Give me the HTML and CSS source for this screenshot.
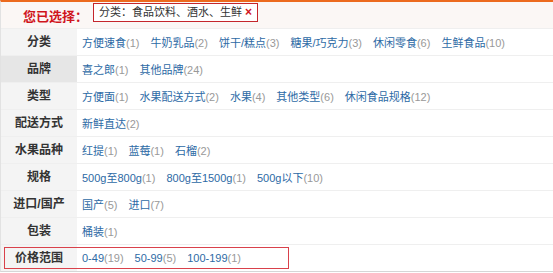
FILE: index.html
```html
<!DOCTYPE html>
<html lang="zh-CN">
  <head>
    <meta charset="UTF-8" />
    <meta name="viewport" content="width=device-width, initial-scale=1.0" />
    <title>筛选</title>
    <link rel="stylesheet" href="styles.css">
  </head>
  <body>
    <div class="filter">
      <div class="selected">
        <span class="selected-title">您已选择：</span>
        <span class="selected-tag">分类：食品饮料、酒水、生鲜 <b class="close">×</b></span>
      </div>

      <div class="row">
        <div class="label">分类</div>
        <div class="values">
          <a href="#">方便速食<i>(1)</i></a>
          <a href="#">牛奶乳品<i>(2)</i></a>
          <a href="#">饼干/糕点<i>(3)</i></a>
          <a href="#">糖果/巧克力<i>(3)</i></a>
          <a href="#">休闲零食<i>(6)</i></a>
          <a href="#">生鲜食品<i>(10)</i></a>
        </div>
      </div>
      <div class="row">
        <div class="label active">品牌</div>
        <div class="values">
          <a href="#">喜之郎<i>(1)</i></a>
          <a href="#">其他品牌<i>(24)</i></a>
        </div>
      </div>
      <div class="row">
        <div class="label">类型</div>
        <div class="values">
          <a href="#">方便面<i>(1)</i></a>
          <a href="#">水果配送方式<i>(2)</i></a>
          <a href="#">水果<i>(4)</i></a>
          <a href="#">其他类型<i>(6)</i></a>
          <a href="#">休闲食品规格<i>(12)</i></a>
        </div>
      </div>
      <div class="row">
        <div class="label">配送方式</div>
        <div class="values">
          <a href="#">新鲜直达<i>(2)</i></a>
        </div>
      </div>
      <div class="row">
        <div class="label">水果品种</div>
        <div class="values">
          <a href="#">红提<i>(1)</i></a>
          <a href="#">蓝莓<i>(1)</i></a>
          <a href="#">石榴<i>(2)</i></a>
        </div>
      </div>
      <div class="row">
        <div class="label">规格</div>
        <div class="values">
          <a href="#">500g至800g<i>(1)</i></a>
          <a href="#">800g至1500g<i>(1)</i></a>
          <a href="#">500g以下<i>(10)</i></a>
        </div>
      </div>
      <div class="row">
        <div class="label">进口/国产</div>
        <div class="values">
          <a href="#">国产<i>(5)</i></a>
          <a href="#">进口<i>(7)</i></a>
        </div>
      </div>
      <div class="row">
        <div class="label">包装</div>
        <div class="values">
          <a href="#">桶装<i>(1)</i></a>
        </div>
      </div>
      <div class="row price">
        <div class="label">价格范围</div>
        <div class="values">
          <a href="#">0-49<i>(19)</i></a>
          <a href="#">50-99<i>(5)</i></a>
          <a href="#">100-199<i>(1)</i></a>
        </div>
      </div>
    </div>
  </body>
</html>
```

FILE: styles.css
```css
body {
  margin: 0;
  font-family: "Liberation Sans", "Noto Sans CJK SC", sans-serif;
  background-color: #fff;
}
.filter {
  width: 553px;
  border-top: 2px solid #ec6a1e;
  border-left: 1px solid #e2e2e2;
  border-bottom: 1px solid #d6d6d6;
  box-sizing: border-box;
}
.selected {
  height: 26px;
  background-color: #fbf7f5;
  display: flex;
  align-items: center;
  padding-left: 22px;
}
.selected-title {
  color: #d0161d;
  font-size: 13px;
  font-weight: bold;
  width: 70px;
}
.selected-tag {
  height: 17px;
  line-height: 17px;
  border: 1px solid #c4262c;
  padding: 0 5px 0 5px;
  font-size: 11px;
  color: #333;
  background: #fff;
  margin-top: -6px;
}
.close {
  color: #d0161d;
  font-size: 12px;
}
.row {
  display: flex;
  height: 27px;
  border-top: 1px solid #efefef;
  box-sizing: border-box;
  position: relative;
}
.label {
  width: 76px;
  background-color: #f4f4f4;
  font-size: 12px;
  font-weight: bold;
  color: #333;
  text-align: center;
  line-height: 26px;
}
.label.active {
  background-color: #e6e6e6;
}
.values {
  display: flex;
  align-items: center;
  padding-left: 5px;
}
.values a {
  font-size: 11px;
  color: #2d6aa5;
  text-decoration: none;
  margin-right: 11px;
}
.values i {
  font-style: normal;
  color: #999;
}
.price::after {
  content: "";
  position: absolute;
  left: 3px;
  top: 2px;
  width: 283px;
  height: 20px;
  border: 1px solid #d9414b;
}
```
